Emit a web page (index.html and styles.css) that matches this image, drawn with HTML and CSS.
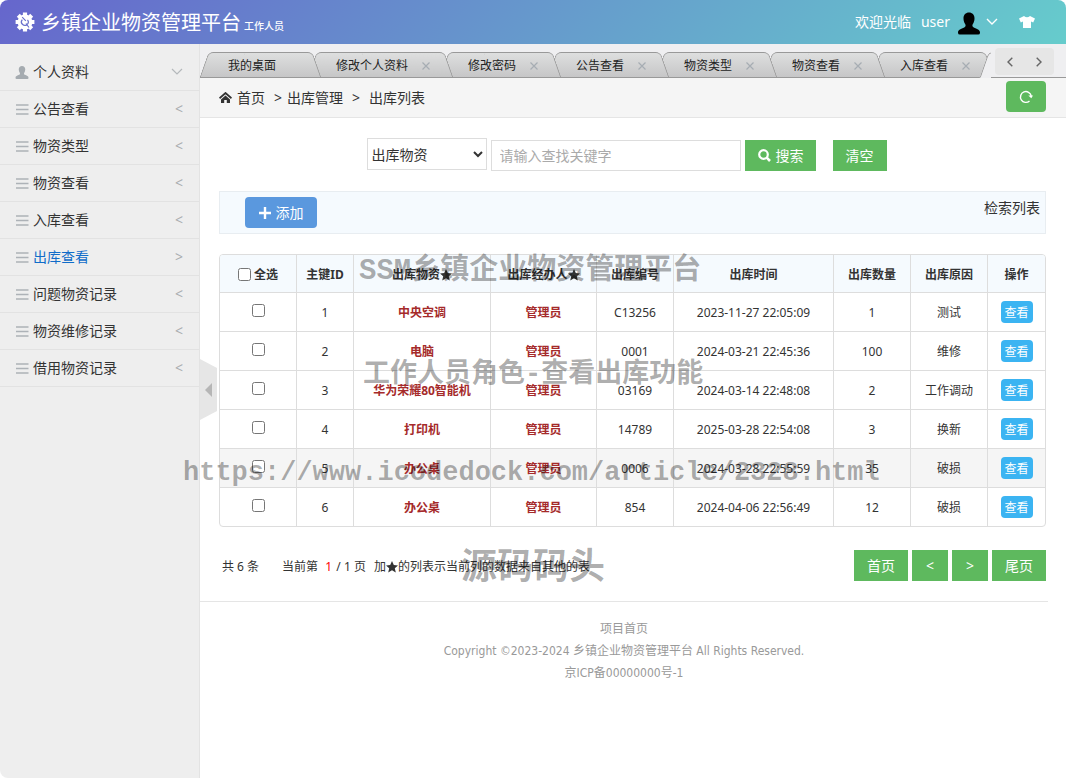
FILE: index.html
```html
<!DOCTYPE html>
<html lang="zh-CN">
<head>
<meta charset="utf-8">
<meta name="viewport" content="width=device-width, initial-scale=1">
<title>乡镇企业物资管理平台</title>
<link rel="stylesheet" href="styles.css">
</head>
<body>
<svg class="defs" width="0" height="0" aria-hidden="true">
  <symbol id="i-bars" viewBox="0 0 14 13"><path d="M1 2h12.500M1 6.500h12.500M1 11h12.500" stroke="#adb2b7" stroke-width="1.700" fill="none"/></symbol>
  <symbol id="i-person" viewBox="0 0 24 24"><path d="M12 0c3.600 0 6 2.400 6 6.500 0 2.500-.8 4.500-1.800 6-.9 1.300-.6 3 1 3.800C20.500 17.800 24 18.800 24 21.500V22q0 2-2 2H2q-2 0-2-2v-.5c0-2.700 3.500-3.700 6.800-5.200 1.600-.8 1.900-2.500 1-3.800C6.800 11 6 9 6 6.500 6 2.400 8.400 0 12 0z" fill="currentColor"/></symbol>
  <symbol id="i-star" viewBox="0 0 12 12"><path d="M6 0l1.800 4 4.200.4-3.200 2.900 1 4.200L6 9.300l-3.800 2.200 1-4.200L0 4.400 4.200 4z" fill="currentColor"/></symbol>
  <symbol id="i-close" viewBox="0 0 8 8"><path d="M.5.5l7 7M7.500.5l-7 7" stroke="#a6adb3" stroke-width="1.200" fill="none"/></symbol>
</svg>

<header class="top">
  <h1 class="brand">
    <svg class="gear" viewBox="0 0 20 20" aria-hidden="true">
      <g stroke="#fff" stroke-width="4.200"><path d="M10 .6v18.800M.6 10h18.800M3.300 3.300l13.400 13.400M16.700 3.300L3.300 16.700"/></g>
      <circle cx="10" cy="10" r="7.400" fill="#fff"/>
      <path d="M7.300 7.600a3.400 3.400 0 1 0 5.200.2M7.200 5.200l3.600 3.600M11 11.500l3 4" fill="none" stroke="#6870cc" stroke-width="1.200"/>
    </svg>
    <span class="name">乡镇企业物资管理平台</span>
    <small class="role">工作人员</small>
  </h1>
  <div class="account">
    <span>欢迎光临</span>
    <a class="user" href="#">user
      <svg class="avatar" aria-hidden="true"><use href="#i-person"/></svg>
      <svg class="caret" viewBox="0 0 12 8" aria-hidden="true"><path d="M1 1l5 5 5-5" fill="none" stroke="#fff" stroke-width="1.400"/></svg>
    </a>
    <button class="skin" type="button" aria-label="换肤"><svg viewBox="0 0 16 12" aria-hidden="true"><path d="M5 0q3 2.600 6 0l5 2.600-1.800 3.800-2.200-.9V12H4V5.500l-2.200.9L0 2.600z" fill="#fff"/></svg></button>
  </div>
</header>

<div class="shell">
  <nav class="side">
    <ul>
      <li><a href="#"><svg class="pic" aria-hidden="true"><use href="#i-person"/></svg><span>个人资料</span><svg class="down" viewBox="0 0 12 8" aria-hidden="true"><path d="M1 1l5 5 5-5" fill="none" stroke="#b4b8bb" stroke-width="1.200"/></svg></a></li>
      <li><a href="#"><svg class="pic" aria-hidden="true"><use href="#i-bars"/></svg><span>公告查看</span><b>&lt;</b></a></li>
      <li><a href="#"><svg class="pic" aria-hidden="true"><use href="#i-bars"/></svg><span>物资类型</span><b>&lt;</b></a></li>
      <li><a href="#"><svg class="pic" aria-hidden="true"><use href="#i-bars"/></svg><span>物资查看</span><b>&lt;</b></a></li>
      <li><a href="#"><svg class="pic" aria-hidden="true"><use href="#i-bars"/></svg><span>入库查看</span><b>&lt;</b></a></li>
      <li><a class="on" href="#"><svg class="pic" aria-hidden="true"><use href="#i-bars"/></svg><span>出库查看</span><b>&gt;</b></a></li>
      <li><a href="#"><svg class="pic" aria-hidden="true"><use href="#i-bars"/></svg><span>问题物资记录</span><b>&lt;</b></a></li>
      <li><a href="#"><svg class="pic" aria-hidden="true"><use href="#i-bars"/></svg><span>物资维修记录</span><b>&lt;</b></a></li>
      <li><a href="#"><svg class="pic" aria-hidden="true"><use href="#i-bars"/></svg><span>借用物资记录</span><b>&lt;</b></a></li>
    </ul>
  </nav>

  <main class="main">
    <button class="fold" type="button" aria-label="收起菜单"><svg viewBox="0 0 17 61" aria-hidden="true"><path d="M0 0l17 9v43L0 61z" fill="#e6e6e6"/><path d="M12 24v14l-7-7z" fill="#b6b6b6"/></svg></button>

    <div class="tabbar">
      <ul class="tabs">
        <li class="first"><span>我的桌面</span></li>
        <li><span>修改个人资料</span><svg aria-hidden="true"><use href="#i-close"/></svg></li>
        <li><span>修改密码</span><svg aria-hidden="true"><use href="#i-close"/></svg></li>
        <li><span>公告查看</span><svg aria-hidden="true"><use href="#i-close"/></svg></li>
        <li><span>物资类型</span><svg aria-hidden="true"><use href="#i-close"/></svg></li>
        <li><span>物资查看</span><svg aria-hidden="true"><use href="#i-close"/></svg></li>
        <li><span>入库查看</span><svg aria-hidden="true"><use href="#i-close"/></svg></li>
        <li class="current"></li>
      </ul>
      <div class="scroller">
        <button type="button" aria-label="向左"><svg viewBox="0 0 6 10" aria-hidden="true"><path d="M5.300.7L1 5l4.300 4.300"/></svg></button>
        <button type="button" aria-label="向右"><svg viewBox="0 0 6 10" aria-hidden="true"><path d="M.7.7L5 5 .7 9.300"/></svg></button>
      </div>
    </div>

    <div class="crumbs">
      <svg class="home" viewBox="0 0 13 11" aria-hidden="true"><path d="M.5 6.200L6.500 1l6 5.200" fill="none" stroke="#333" stroke-width="1.800"/><path d="M6.500 3.500L11 7.400V11H7.800V8H5.200v3H2V7.400z" fill="#333"/></svg>
      <a href="#">首页</a><i>&gt;</i><a href="#">出库管理</a><i class="wide">&gt;</i><span>出库列表</span>
      <button class="reload" type="button" aria-label="刷新"><svg viewBox="0 0 14 14" aria-hidden="true"><path d="M10.500 11A5.400 5.400 0 1 1 12.200 6" fill="none" stroke="#fff" stroke-width="1.400"/><path d="M9.300 5.600H14L12.300 8.200z" fill="#fff"/></svg></button>
    </div>

    <div class="content">
      <form class="search">
        <select aria-label="查找字段"><option>出库物资</option></select>
        <input type="text" aria-label="关键字" placeholder="请输入查找关键字">
        <button class="green" type="button"><svg class="lens" viewBox="0 0 13 13" aria-hidden="true"><circle cx="5.500" cy="5.500" r="4.300" fill="none" stroke="#fff" stroke-width="2.200"/><path d="M8.700 8.700l3.300 3.300" stroke="#fff" stroke-width="2.600"/></svg>搜索</button>
        <button class="green clear" type="reset">清空</button>
      </form>

      <div class="tools">
        <button class="add" type="button"><svg viewBox="0 0 12 12" aria-hidden="true"><path d="M6 0v12M0 6h12" stroke="#fff" stroke-width="2.400"/></svg>添加</button>
        <span>检索列表</span>
      </div>

      <div class="grid">
      <table>
        <colgroup><col class="c1"><col class="c2"><col class="c3"><col class="c4"><col class="c5"><col class="c6"><col class="c7"><col class="c8"><col class="c9"></colgroup>
        <thead>
          <tr><th><label><input type="checkbox">全选</label></th><th>主键ID</th><th>出库物资<svg class="star" aria-hidden="true"><use href="#i-star"/></svg></th><th>出库经办人<svg class="star" aria-hidden="true"><use href="#i-star"/></svg></th><th>出库编号</th><th>出库时间</th><th>出库数量</th><th>出库原因</th><th>操作</th></tr>
        </thead>
        <tbody>
          <tr><td><input type="checkbox" aria-label="选择 1"></td><td>1</td><td class="red">中央空调</td><td class="red">管理员</td><td>C13256</td><td>2023-11-27 22:05:09</td><td>1</td><td>测试</td><td><button class="view" type="button">查看</button></td></tr>
          <tr><td><input type="checkbox" aria-label="选择 2"></td><td>2</td><td class="red">电脑</td><td class="red">管理员</td><td>0001</td><td>2024-03-21 22:45:36</td><td>100</td><td>维修</td><td><button class="view" type="button">查看</button></td></tr>
          <tr><td><input type="checkbox" aria-label="选择 3"></td><td>3</td><td class="red">华为荣耀80智能机</td><td class="red">管理员</td><td>03169</td><td>2024-03-14 22:48:08</td><td>2</td><td>工作调动</td><td><button class="view" type="button">查看</button></td></tr>
          <tr><td><input type="checkbox" aria-label="选择 4"></td><td>4</td><td class="red">打印机</td><td class="red">管理员</td><td>14789</td><td>2025-03-28 22:54:08</td><td>3</td><td>换新</td><td><button class="view" type="button">查看</button></td></tr>
          <tr class="hover"><td><input type="checkbox" aria-label="选择 5"></td><td>5</td><td class="red">办公桌</td><td class="red">管理员</td><td>0006</td><td>2024-03-28 22:55:59</td><td>35</td><td>破损</td><td><button class="view" type="button">查看</button></td></tr>
          <tr><td><input type="checkbox" aria-label="选择 6"></td><td>6</td><td class="red">办公桌</td><td class="red">管理员</td><td>854</td><td>2024-04-06 22:56:49</td><td>12</td><td>破损</td><td><button class="view" type="button">查看</button></td></tr>
        </tbody>
      </table>
      </div>

      <div class="pager">
        <p><span>共 6 条</span><span class="page">当前第&nbsp; <em>1</em> / 1 页</span><span class="note">加<svg class="star" aria-hidden="true"><use href="#i-star"/></svg>的列表示当前列的数据来自其他的表</span></p>
        <div class="pages">
          <button class="green" type="button">首页</button>
          <button class="green step" type="button">&lt;</button>
          <button class="green step" type="button">&gt;</button>
          <button class="green" type="button">尾页</button>
        </div>
      </div>
    </div>

    <footer class="foot">
      <a href="#">项目首页</a>
      <p>Copyright ©2023-2024 乡镇企业物资管理平台 All Rights Reserved.</p>
      <p>京ICP备00000000号-1</p>
    </footer>
  </main>
</div>

<div class="mark mark-title">SSM乡镇企业物资管理平台</div>
<div class="mark mark-sub">工作人员角色-查看出库功能</div>
<div class="mark mark-url">https://www.icodedock.com/article/2328.html</div>
<div class="mark mark-site">源码码头</div>
</body>
</html>
```
FILE: styles.css
```css
* { box-sizing: border-box; }
body {
  margin: 0;
  min-height: 100vh;
  display: flex;
  flex-direction: column;
  position: relative;
  background: #fff;
  color: #333;
  font: 14px/20px "Noto Sans", "Noto Sans CJK SC", sans-serif;
}
ul, p, h1 { margin: 0; padding: 0; list-style: none; }
a { color: inherit; text-decoration: none; }
button { font: inherit; color: inherit; border: 0; padding: 0; background: none; display: flex; align-items: center; justify-content: center; }
svg { flex: none; }
.defs { position: absolute; }

.top {
  height: 44px;
  display: flex;
  align-items: center;
  justify-content: space-between;
  padding: 0 31px 0 15px;
  color: #fff;
  background: linear-gradient(135deg, #6666cc, #66cccc);
  border-radius: 8px 8px 0 0;
}
.brand { display: flex; align-items: center; font-weight: 400; }
.gear { width: 20px; height: 20px; margin-right: 6px; }
.name { font-size: 20px; line-height: 44px; padding-top: 2px; }
.role { font-size: 10px; line-height: 20px; font-weight: 500; margin: 8px 0 0 3px; }
.account { display: flex; align-items: center; gap: 10px; }
.user { display: flex; align-items: center; }
.avatar { width: 22px; height: 23px; margin: 2px 6px 0 8px; color: #000; }
.caret { width: 12px; height: 8px; }
.skin { margin-left: 11px; }
.skin svg { width: 16px; height: 12px; }

.shell { flex: 1; display: flex; }
.side {
  flex: none;
  width: 200px;
  padding-top: 10px;
  background: #eee;
  border-right: 1px solid #e3e3e3;
  border-radius: 0 0 0 8px;
}
.side a {
  display: flex;
  align-items: center;
  height: 37px;
  padding: 0 16px 0 15px;
  border-bottom: 1px solid #e2e2e2;
}
.side span { flex: 1; }
.side .pic { width: 14px; height: 13px; margin-right: 4px; color: #a5abb0; }
.side b { font-weight: 400; color: #a9adb0; }
.side .down { width: 12px; height: 8px; }
.side .on { color: #0f6cc9; }

.main { flex: 1; min-width: 0; position: relative; }
.fold { position: absolute; left: 0; top: 315px; }
.fold svg { width: 17px; height: 61px; }

.tabbar {
  display: flex;
  height: 34px;
  background: linear-gradient(#999, #999) bottom / 100% 1px no-repeat #efeff1;
}
.tabs { flex: 1; min-width: 0; display: flex; align-items: flex-end; overflow: hidden; }
.tabs li {
  flex: none;
  position: relative;
  isolation: isolate;
  display: flex;
  align-items: center;
  gap: 14px;
  height: 26px;
  margin-right: -13px;
  padding: 2px 23px 0 28px;
  font-size: 12px;
  color: #222;
}
.tabs li::before, .tabs li::after {
  content: "";
  position: absolute;
  z-index: -1;
  top: 0;
  bottom: 0;
  border: 1px solid #999;
  background: linear-gradient(#dedfdf, #c6c6c7);
}
.tabs li::before { left: 4px; right: 40%; border-right: 0; border-radius: 5px 0 0 0; transform: skewX(-19deg); }
.tabs li::after { right: 4px; left: 40%; border-left: 0; border-radius: 0 5px 0 0; transform: skewX(19deg); }
.tabs svg { width: 8px; height: 8px; }
.tabs .first { padding-right: 45px; }
.tabs li:nth-child(1) { z-index: 7; }
.tabs li:nth-child(2) { z-index: 6; }
.tabs li:nth-child(3) { z-index: 5; }
.tabs li:nth-child(4) { z-index: 4; }
.tabs li:nth-child(5) { z-index: 3; }
.tabs li:nth-child(6) { z-index: 2; }
.tabs li:nth-child(7) { z-index: 1; }
.tabs .current { z-index: 8; width: 121px; }
.tabs .current::before, .tabs .current::after { background: #efeff1; border-bottom-color: #efeff1; }
.scroller {
  display: flex;
  align-items: center;
  justify-content: space-around;
  width: 59px;
  height: 27px;
  margin: 4px 12px 0 4px;
  background: #e6e6e6;
  border-radius: 4px;
}
.scroller button { width: 28px; height: 27px; }
.scroller svg { width: 6px; height: 10px; fill: none; stroke: #666; stroke-width: 1.400; }

.crumbs {
  display: flex;
  align-items: center;
  height: 40px;
  padding: 0 20px 0 19px;
  background: #f5f5f5;
  border-bottom: 1px solid #e5e5e5;
}
.home { width: 13px; height: 11px; margin-right: 5px; }
.crumbs i { font-style: normal; margin: 0 5px 0 9px; }
.crumbs .wide { margin: 0 9px; }
.reload { width: 40px; height: 31px; margin: 0 0 2px auto; background: #5eb95e; border-radius: 4px; }
.reload svg { width: 14px; height: 14px; }

.content { padding: 20px 20px 20px 19px; }
.search { display: flex; align-items: center; justify-content: center; gap: 4px; padding-right: 12px; height: 34px; }
.search select {
  width: 120px;
  height: 32px;
  margin-bottom: 2px;
  padding: 0;
  font: inherit;
  color: #333;
  background: #fff;
  border: 1px solid #ddd;
}
.search input {
  width: 250px;
  height: 31px;
  padding: 0 8px;
  font: inherit;
  border: 1px solid #ddd;
}
.search input::placeholder { color: #aaa; }
.green { min-width: 54px; height: 31px; padding: 1px 12px 0; color: #fff; background: #5eb95e; }
.green.clear { margin-left: 13px; }
.lens { width: 13px; height: 13px; margin: 0 5px 0 1px; }

.tools {
  display: flex;
  justify-content: space-between;
  height: 43px;
  margin-top: 19px;
  padding: 5px 5px 5px 25px;
  background: #f5fafe;
  border: 1px solid #e8edf1;
}
.tools span { line-height: 22px; }
.add { width: 72px; height: 31px; color: #fff; background: #5a98de; border-radius: 4px; }
.add svg { width: 12px; height: 12px; margin-right: 5px; }

.grid { margin-top: 20px; border: 1px solid #ddd; border-radius: 4px; overflow: hidden; }
table { width: 100%; table-layout: fixed; border-collapse: separate; border-spacing: 0; font-size: 12px; }
th, td { padding: 2px 0 0; text-align: center; border-left: 1px solid #ddd; border-top: 1px solid #ddd; height: 39px; }
th { height: 37px; font-weight: 700; background: #f5fafe; border-top: 0; }
th:first-child, td:first-child { border-left: 0; }
td:last-child { padding: 0; }
.c1 { width: 76px; }
.c5, .c7, .c8 { width: 77px; }
.c2 { width: 57px; }
.c3 { width: 137px; }
.c4 { width: 106px; }
.c6 { width: 160px; }
.c9 { width: 58px; }
th label { display: flex; align-items: center; justify-content: center; gap: 3px; }
input[type="checkbox"] { width: 13px; height: 13px; margin: 0; }
td input[type="checkbox"] { margin-bottom: 2px; }
.star { width: 12px; height: 12px; vertical-align: -2px; }
.red { color: #a52a2a; font-weight: 700; }
.hover td { background: #f5f5f5; }
.view { width: 32px; height: 22px; margin: 0 auto; padding-top: 2px; color: #fff; background: #3bb4f2; border-radius: 4px; }

.pager { display: flex; justify-content: space-between; align-items: center; margin-top: 23px; }
.pager p { display: flex; padding: 2px 0 0 3px; font-size: 12px; }
.page { margin-left: 23px; }
.page em { font-style: normal; color: #f00; margin: 0 1px; }
.note { margin-left: 8px; }
.pages { display: flex; gap: 4px; }
.green.step { min-width: 36px; }

.foot {
  margin-right: 18px;
  padding-top: 16px;
  border-top: 1px solid #e5e5e5;
  color: #999;
  text-align: center;
  font: 12px/22px "DejaVu Sans Condensed", "Noto Sans CJK SC", sans-serif;
}

.mark {
  position: absolute;
  color: rgba(0, 0, 0, 0.32);
  font: 700 27px/36px "Liberation Mono", "Noto Sans CJK SC", monospace;
  white-space: nowrap;
  pointer-events: none;
}
.mark-title { left: 359px; top: 254px; font-size: 29px; }
.mark-sub { left: 363px; top: 357px; }
.mark-url { left: 183px; top: 455px; }
.mark-site { left: 461px; top: 552px; font-size: 36px; }
```
